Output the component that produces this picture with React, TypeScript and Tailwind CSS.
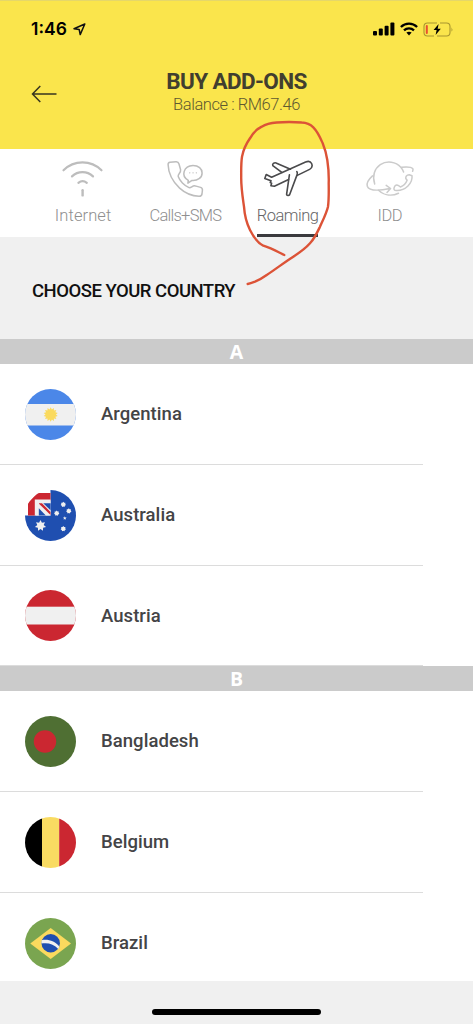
import React from 'react';

interface Country {
  name: string;
  flag: React.ReactNode;
}

interface Tab {
  label: string;
  icon: React.ReactNode;
  tracking: string;
  active?: boolean;
}

const InternetIcon = () => (
  <svg width="46" height="44" viewBox="60 156 46 44" fill="none" stroke="#bdbdbd" strokeLinecap="round">
    <path d="M63.5 170.3C74 159.8 91 159.8 101.5 170.3" strokeWidth="2.2" />
    <path d="M72 176.4C78 170.8 87 170.8 93 176.4" strokeWidth="2.2" />
    <path d="M78.4 182.8C81 180.6 84.2 180.6 86.8 182.8" strokeWidth="2.2" />
    <path d="M82.6 190.2V195.4" strokeWidth="2.4" />
  </svg>
);

const CallsIcon = () => (
  <svg width="46" height="44" viewBox="163 156 46 44" fill="none" stroke="#bdbdbd" strokeWidth="1.5" strokeLinejoin="round" strokeLinecap="round">
    <path d="M171 162.3L177 161.8C178.6 161.7 179.6 162.5 180 164L181.6 169.7C182.2 173 178.6 174 179.2 176.6C180.6 180.8 185.4 185.6 190 187.6C192.3 188.2 193.4 185.2 196.2 185.9L201.6 187.4C203 187.9 203.6 188.9 203.4 190.4L203 194C202.7 195.6 201.6 196.3 200 196.2C193.5 196 186.4 193.4 180.6 188.1C174.4 182.2 169.4 173.4 169.1 164.7C169 163.3 169.8 162.4 171 162.3Z" />
    <path d="M188.9 183.2L189.3 180.3C181.5 176 184.6 165.7 194 165.5C199.5 165.5 203.1 168.7 203.1 172.9C203.1 178 198.4 180.8 193 180.4Z" />
    <path d="M190.7 172.8h.1M194 172.8h.1M197.3 172.8h.1" strokeWidth="1.3" />
  </svg>
);

const RoamingIcon = () => (
  <svg width="52" height="44" viewBox="262 156 52 44" fill="none" stroke="#4a4a4c" strokeWidth="1.6" strokeLinejoin="round" strokeLinecap="round">
    <path d="M290.5 169.2L276 162.9C274.2 162.4 272 164 272.8 165.6L281.8 172.4" />
    <path d="M288.6 179.5L274.4 186.3L270.9 185.8L271.6 183.2L270.2 182.5L271 180.8L264.8 178.4L266.2 174.5L271.6 177.2L305.6 162C308 161 310.6 161.4 311.6 163.5C312.6 165.8 311.8 168.2 309.6 169.4L297.3 175.4" />
    <path d="M289.4 174.8L286.6 194.4C286.7 195.8 288.9 195.9 289.6 194.8L297.2 174.4C297.5 173.2 297.4 172.4 296.8 171.6" />
  </svg>
);

const IddIcon = () => (
  <svg width="52" height="44" viewBox="364 156 52 44" fill="none" stroke="#cbcbcb" strokeWidth="1.5" strokeLinejoin="round" strokeLinecap="round">
    <path d="M374.7 184C372 176 374.6 168.4 380.3 164.6C387 160.4 396 161.7 400.8 167.2C402.2 168.8 403.1 170.3 403.6 172" />
    <path d="M378.6 190.2C384.5 195.8 392.2 196.2 398.5 193.3" />
    <path d="M372.5 175.9C368.4 179.6 366.5 183.5 367.3 186.2C368.8 190.7 378 190.9 390 188.6M386.2 185.4L390.6 188.5L387 192.5" />
    <path d="M401.7 167.2C406.9 166.7 411.5 166.9 412.8 168.7C413.2 169.5 413 170.5 412.6 171.3" />
    <path d="M409.3 174.7L412 175.7C412.9 183 405.5 190.8 396.4 190.5C393.9 190.3 393.6 189.2 394.2 187.4C394.9 185.2 396.6 184.5 398.6 185.7L400.4 187C403 186.2 405.9 183.5 407.1 180.3L405.8 178.5C405.5 176.8 406.5 174.6 409.3 174.7Z" />
  </svg>
);

// Every flag is drawn on a 51x51 canvas and clipped to a circle
const Flag = ({ children }: { children: React.ReactNode }) => (
  <svg className="w-[51px] h-[51px] rounded-full shrink-0" viewBox="0 0 51 51">
    {children}
  </svg>
);

const starPoints = (cx: number, cy: number, outer: number, inner: number, n: number) =>
  Array.from({ length: n * 2 }, (_, i) => {
    const r = i % 2 ? inner : outer;
    const a = (Math.PI * i) / n - Math.PI / 2;
    return `${cx + r * Math.cos(a)},${cy + r * Math.sin(a)}`;
  }).join(' ');

const TABS: Tab[] = [
  { label: 'Internet', icon: <InternetIcon />, tracking: 'tracking-[0.1px]' },
  { label: 'Calls+SMS', icon: <CallsIcon />, tracking: 'tracking-[-0.75px]' },
  { label: 'Roaming', icon: <RoamingIcon />, tracking: 'tracking-[-0.5px]', active: true },
  { label: 'IDD', icon: <IddIcon />, tracking: 'tracking-[-0.5px]' },
];

const SECTIONS: { letter: string; countries: Country[] }[] = [
  {
    letter: 'A',
    countries: [
      {
        name: 'Argentina',
        flag: (
          <Flag>
            <rect width="51" height="51" fill="#4b87e8" />
            <rect y="15" width="51" height="21.5" fill="#f0f0f0" />
            <polygon points={starPoints(25.7, 25.5, 7.2, 5.2, 14)} fill="#fada5e" />
          </Flag>
        ),
      },
      {
        name: 'Australia',
        flag: (
          <Flag>
            <path d="M25.5 0H51V51H0V25.5H25.5Z" fill="#1f4fb0" />
            <path d="M3 25.5V13L12.5 3H25.5V10.5H11V25.5Z" fill="#cb2731" />
            <path d="M9.8 25.5V9.6H25.5V13.5H19.5L25.5 19.5V25.5Z" fill="#f0f0f0" />
            <path d="M18.2 13.3H25.5V20.2Z" fill="#1f4fb0" />
            <path d="M13.8 18.2L20.8 25.5H13.8Z" fill="#1f4fb0" />
            <path d="M14 13.3H17L25.5 22V25L14 13.7Z" fill="#cb2731" />
            <polygon points={starPoints(15.5, 35.7, 5.7, 3.3, 7)} fill="#f0f0f0" />
            <polygon points={starPoints(38.3, 14.5, 2.7, 2, 7)} fill="#f0f0f0" />
            <polygon points={starPoints(31.7, 23.2, 2.7, 2, 7)} fill="#f0f0f0" />
            <polygon points={starPoints(43.8, 21, 2.7, 2, 7)} fill="#f0f0f0" />
            <polygon points={starPoints(38.3, 38.8, 2.7, 2, 7)} fill="#f0f0f0" />
            <polygon points={starPoints(39.8, 28.2, 1.9, 0.9, 5)} fill="#f0f0f0" />
          </Flag>
        ),
      },
      {
        name: 'Austria',
        flag: (
          <Flag>
            <rect width="51" height="51" fill="#cb2731" />
            <rect y="16.7" width="51" height="17.8" fill="#f0f0f0" />
          </Flag>
        ),
      },
    ],
  },
  {
    letter: 'B',
    countries: [
      {
        name: 'Bangladesh',
        flag: (
          <Flag>
            <rect width="51" height="51" fill="#4f6f33" />
            <circle cx="20" cy="25.5" r="11.2" fill="#cb2731" />
          </Flag>
        ),
      },
      {
        name: 'Belgium',
        flag: (
          <Flag>
            <rect width="17.2" height="51" fill="#000" />
            <rect x="17" width="17.3" height="51" fill="#f9db62" />
            <rect x="34.2" width="17" height="51" fill="#cb2731" />
          </Flag>
        ),
      },
      {
        name: 'Brazil',
        flag: (
          <Flag>
            <rect width="51" height="51" fill="#7aa550" />
            <path d="M5.3 25.5L25.7 10L46 25.5L25.7 41Z" fill="#fada5e" />
            <circle cx="25.7" cy="25.3" r="9.2" fill="#1f4fb0" />
            <path d="M16.7 22.2C23 20.8 30.7 23.6 34.3 28.5L33.3 31C29 26 22.5 24.2 16.4 25.6Z" fill="#f0f0f0" />
          </Flag>
        ),
      },
    ],
  },
];

const StatusBar = () => (
  <div className="flex items-center justify-between h-[56px] pl-[31px] pr-[19px]">
    <div className="flex items-center gap-[6px]">
      <span className="font-['Inter'] font-semibold text-[17.5px] leading-none text-black">1:46</span>
      <svg width="13" height="13" viewBox="0 0 13 13" fill="none" stroke="#111" strokeWidth="1.5" strokeLinejoin="round">
        <path d="M11.8 1L1 5.8L6.2 6.5L7.2 11.6Z" />
      </svg>
    </div>
    <div className="flex items-center gap-[5px]">
      <svg width="22" height="14" viewBox="0 0 22 14">
        <rect x="0" y="9" width="4" height="4.6" rx="1" />
        <rect x="5.8" y="6.6" width="4" height="7" rx="1" />
        <rect x="11.6" y="3.8" width="4" height="9.8" rx="1" />
        <rect x="17.4" y="0.4" width="4" height="13.2" rx="1" />
      </svg>
      <svg width="18" height="14" viewBox="0 0 18 14" fill="none" stroke="#000" strokeWidth="2.3">
        <path d="M0.9 5C5.5 0.6 12.5 0.6 17.1 5" />
        <path d="M4 8.4C6.8 5.7 11.2 5.7 14 8.4" />
        <path d="M6.4 10.6Q9 8.7 11.6 10.6L9 13.4Z" fill="#000" stroke="none" />
      </svg>
      <svg width="31" height="15" viewBox="0 0 31 15">
        <path d="M14 1H4.5Q1 1 1 4.5V10.5Q1 14 4.5 14H11M17 1H23.5Q27 1 27 4.5V10.5Q27 14 23.5 14H14" fill="none" stroke="#a8962f" strokeWidth="1.1" />
        <rect x="2.8" y="3" width="2" height="9" rx="1" fill="#e8502f" />
        <path d="M15.6 2L10.6 8.1H13.6L12.6 12.9L17.8 6.7H14.7Z" fill="#000" />
        <path d="M28.5 5.2Q30.3 7.5 28.5 9.8Z" fill="#a8962f" />
      </svg>
    </div>
  </div>
);

const App: React.FC = () => {
  return (
    <div className="relative w-[473px] h-[1024px] overflow-hidden bg-[#f0f0f0] font-['Roboto',sans-serif]">
      <header className="h-[149px] bg-[#fae54c] border-t border-[#e5d76a]">
        <StatusBar />
        <div className="grid grid-cols-[31px_1fr_31px] pt-[11px] px-[31px]">
          <button className="flex items-center pt-[4px]">
            <svg width="26" height="18" viewBox="0 0 26 18" fill="none" stroke="#37351f" strokeWidth="1.5" className="shrink-0">
              <path d="M9.3 1L1.5 9L9.3 17M1.5 9H25.5" />
            </svg>
          </button>
          <div className="text-center">
            <h1 className="font-bold text-[22.5px] leading-[26px] tracking-[-0.6px] text-[#413e2f]">BUY ADD-ONS</h1>
            <p className="font-light text-[16.5px] leading-[22px] tracking-[-0.45px] text-[#5f5930]">Balance : RM67.46</p>
          </div>
        </div>
      </header>

      <nav className="grid grid-cols-4 h-[88px] px-[32px] bg-white">
        {TABS.map((tab) => (
          <button key={tab.label} className="flex flex-col items-center pt-[7px]">
            {tab.icon}
            <span className={`mt-[6px] font-light text-[16.5px] leading-[20px] ${tab.tracking} ${tab.active ? 'text-[#666668]' : 'text-[#8f8f8f]'}`}>
              {tab.label}
            </span>
            {tab.active && <div className="mt-[8px] w-[61px] h-[3px] bg-[#3b3a3e]" />}
          </button>
        ))}
      </nav>

      <h2 className="h-[102px] pt-[44px] pl-[32px] font-medium text-[18.5px] leading-[21px] tracking-[-0.5px] text-[#111111]">
        CHOOSE YOUR COUNTRY
      </h2>

      {SECTIONS.map((section) => (
        <section key={section.letter}>
          <div className="h-[25px] bg-[#cbcbcb] flex items-center justify-center font-['Open_Sans'] font-bold text-[19.5px] leading-none text-white">
            {section.letter}
          </div>
          <ul className="bg-white">
            {section.countries.map((country) => (
              <li
                key={country.name}
                className="flex items-center h-[100.8px] w-[423px] pt-px pl-[25px] gap-[25px] border-b border-[#dcdcdc]"
              >
                {country.flag}
                <span className="pt-px font-medium text-[18.5px] tracking-[0.05px] text-[#444446]">{country.name}</span>
              </li>
            ))}
          </ul>
        </section>
      ))}

      {/* Bottom safe area with the home indicator */}
      <div className="absolute inset-x-0 bottom-0 h-[43px] bg-[#f0f0f0] flex justify-center pt-[28px]">
        <div className="w-[169px] h-[6px] rounded-full bg-black" />
      </div>

      {/* Hand-drawn marker around the Roaming tab */}
      <svg className="absolute left-0 top-0 pointer-events-none" width="473" height="300" viewBox="0 0 473 300" fill="none" stroke="#dc5337" strokeWidth="2.4" strokeLinecap="round" strokeLinejoin="round">
        <path d="M284.3 255C278 252 272 248.5 263.3 245.7C258 243 253 236 250 230C246 222 244.5 214 244 206.7C242.5 196 241 187 241.2 176.7C241.2 169 241 163 242 156.7C243.5 149 246 144 250 138.3C253 133 257 129 261.7 126.7C266 124 271 122.9 276.7 122.5C285 121.8 293 121.8 301.7 122.5C307 122.7 310 124 313.3 127.3C318 132 320 137 322.7 143.3C325 149 326.5 154 327.3 160C328.5 168 329 175 328.7 183.3C328.8 191 329 199 328 206.7C326.5 213 323 220 320 226.7C317 233 314.5 238.5 310 243.3C305 249 299 253 293.3 256.7C284 262.5 276 269 266.7 275C262.5 278 259 280 255 281.7C252 282.8 250 283.5 247.7 284" />
      </svg>
    </div>
  );
};

export default App;
